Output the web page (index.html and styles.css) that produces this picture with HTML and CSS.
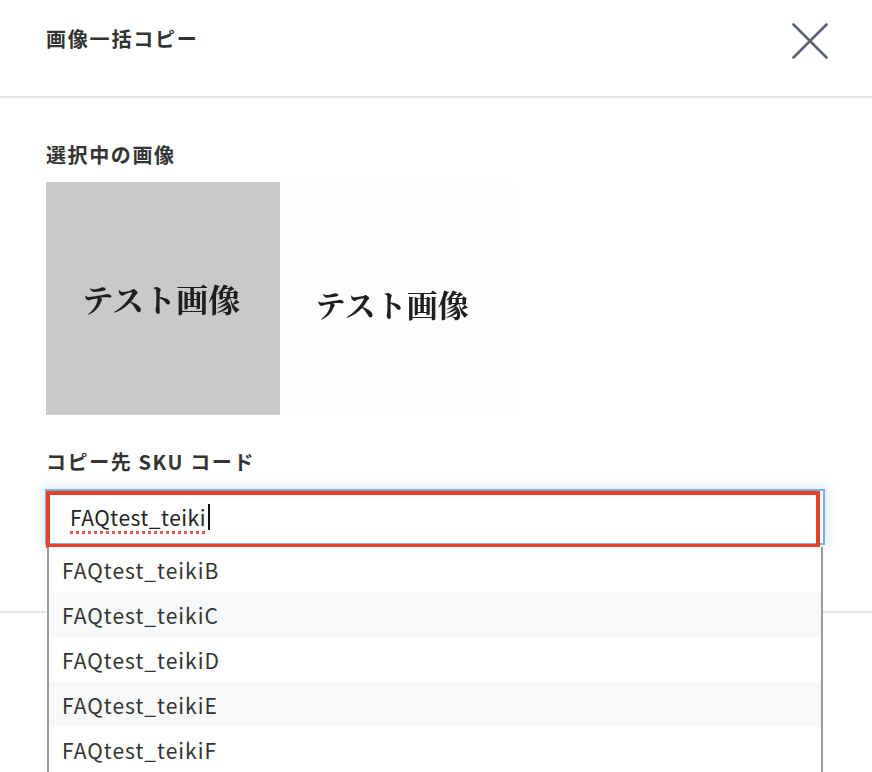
FILE: index.html
```html
<!DOCTYPE html>
<html lang="ja">
<head>
<meta charset="utf-8">
<title>画像一括コピー</title>
<link rel="stylesheet" href="styles.css">
</head>
<body>
<div class="modal">
  <header class="modal-header">
    <h1 class="modal-title">画像一括コピー</h1>
    <button class="close-btn" aria-label="閉じる">
      <svg width="36" height="36" viewBox="0 0 36 36"><path d="M1.5 1.5 L34.5 34.5 M34.5 1.5 L1.5 34.5" stroke="#5e6276" stroke-width="2.6" stroke-linecap="round" fill="none"/></svg>
    </button>
  </header>
  <section class="modal-body">
    <h2 class="label">選択中の画像</h2>
    <div class="thumbs">
      <div class="thumb thumb-gray"><span>テスト画像</span></div>
      <div class="thumb thumb-white"><span>テスト画像</span></div>
    </div>
    <h2 class="label label-sku">コピー先 SKU コード</h2>
    <div class="field">
      <div class="input"><span class="typed">FAQtest_teiki</span><span class="caret"></span></div>
      <div class="annotation"></div>
      <ul class="dropdown">
        <li>FAQtest_teikiB</li>
        <li class="alt">FAQtest_teikiC</li>
        <li>FAQtest_teikiD</li>
        <li class="alt">FAQtest_teikiE</li>
        <li>FAQtest_teikiF</li>
      </ul>
    </div>
  </section>
  <footer class="modal-footer"></footer>
</div>
</body>
</html>
```
FILE: styles.css
```css
html, body {
  margin: 0;
  padding: 0;
  background: #fff;
}
body {
  font-family: "Noto Sans CJK JP", "Noto Sans", sans-serif;
  color: #333;
  overflow: hidden;
  height: 772px;
}
.modal {
  width: 872px;
}
.modal-header {
  height: 98px;
  box-sizing: border-box;
  display: flex;
  justify-content: space-between;
  align-items: flex-start;
  padding: 0 44px 0 46px;
  border-bottom: 2px solid #e5e5e5;
}
.modal-title {
  margin: 0;
  padding-top: 25px;
  font-size: 20px;
  line-height: 28px;
  font-weight: 700;
  color: #333;
  letter-spacing: 1.8px;
}
.close-btn {
  margin-top: 23px;
  padding: 0;
  border: 0;
  background: none;
  width: 36px;
  height: 36px;
  display: block;
}
.close-btn svg {
  display: block;
}
.modal-body {
  padding: 43px 46px 66px;
}
.label {
  margin: 0;
  font-size: 20px;
  line-height: 28px;
  font-weight: 700;
  color: #333;
  letter-spacing: 1.6px;
}
.thumbs {
  display: flex;
  margin-top: 13px;
}
.thumb {
  width: 234px;
  height: 233px;
  display: flex;
  align-items: center;
  justify-content: center;
}
.thumb span {
  font-family: "Noto Serif CJK JP", "Noto Sans CJK JP", serif;
  font-weight: 700;
  color: #1e1e1e;
  filter: blur(0.4px);
}
.thumb-gray {
  background: #c9c9c9;
}
.thumb-gray span {
  font-size: 32px;
  margin-top: -1px;
  margin-left: -4px;
}
.thumb-white {
  background: #fdfdfd;
}
.thumb-white span {
  font-size: 31px;
  margin-top: 10px;
  margin-left: -10px;
}
.label-sku {
  margin-top: 33px;
}
.field {
  position: relative;
  margin-top: 13px;
  width: 780px;
  margin-left: -1px;
}
.input {
  height: 56px;
  box-sizing: border-box;
  border: 2px solid #7db0e8;
  box-shadow: 0 0 10px 3px rgba(125, 176, 232, 0.25);
  display: flex;
  align-items: center;
  padding-left: 23px;
  font-size: 21px;
  letter-spacing: 0.5px;
  color: #222;
  background: #fff;
}
.typed {
  text-decoration-line: underline;
  text-decoration-style: dotted;
  text-decoration-color: #e8585a;
  text-decoration-thickness: 2.5px;
  text-underline-offset: 5px;
}
.caret {
  display: inline-block;
  width: 2px;
  height: 26px;
  background: #111;
  margin-left: 2px;
}
.annotation {
  position: absolute;
  left: 1px;
  top: 2px;
  width: 774px;
  height: 57px;
  box-sizing: border-box;
  border: 4px solid #e8412a;
  pointer-events: none;
}
.dropdown {
  position: absolute;
  left: 2px;
  top: 58px;
  width: 776px;
  box-sizing: border-box;
  margin: 0;
  padding: 0;
  list-style: none;
  border-left: 2px solid #999;
  border-right: 2px solid #999;
  background: #fff;
}
.dropdown li {
  height: 45px;
  line-height: 46px;
  padding-left: 13px;
  font-size: 21px;
  letter-spacing: 1px;
  color: #333;
}
.dropdown li.alt {
  background: #f7f8fa;
}
.modal-footer {
  border-top: 2px solid #e5e5e5;
  height: 160px;
}
```
